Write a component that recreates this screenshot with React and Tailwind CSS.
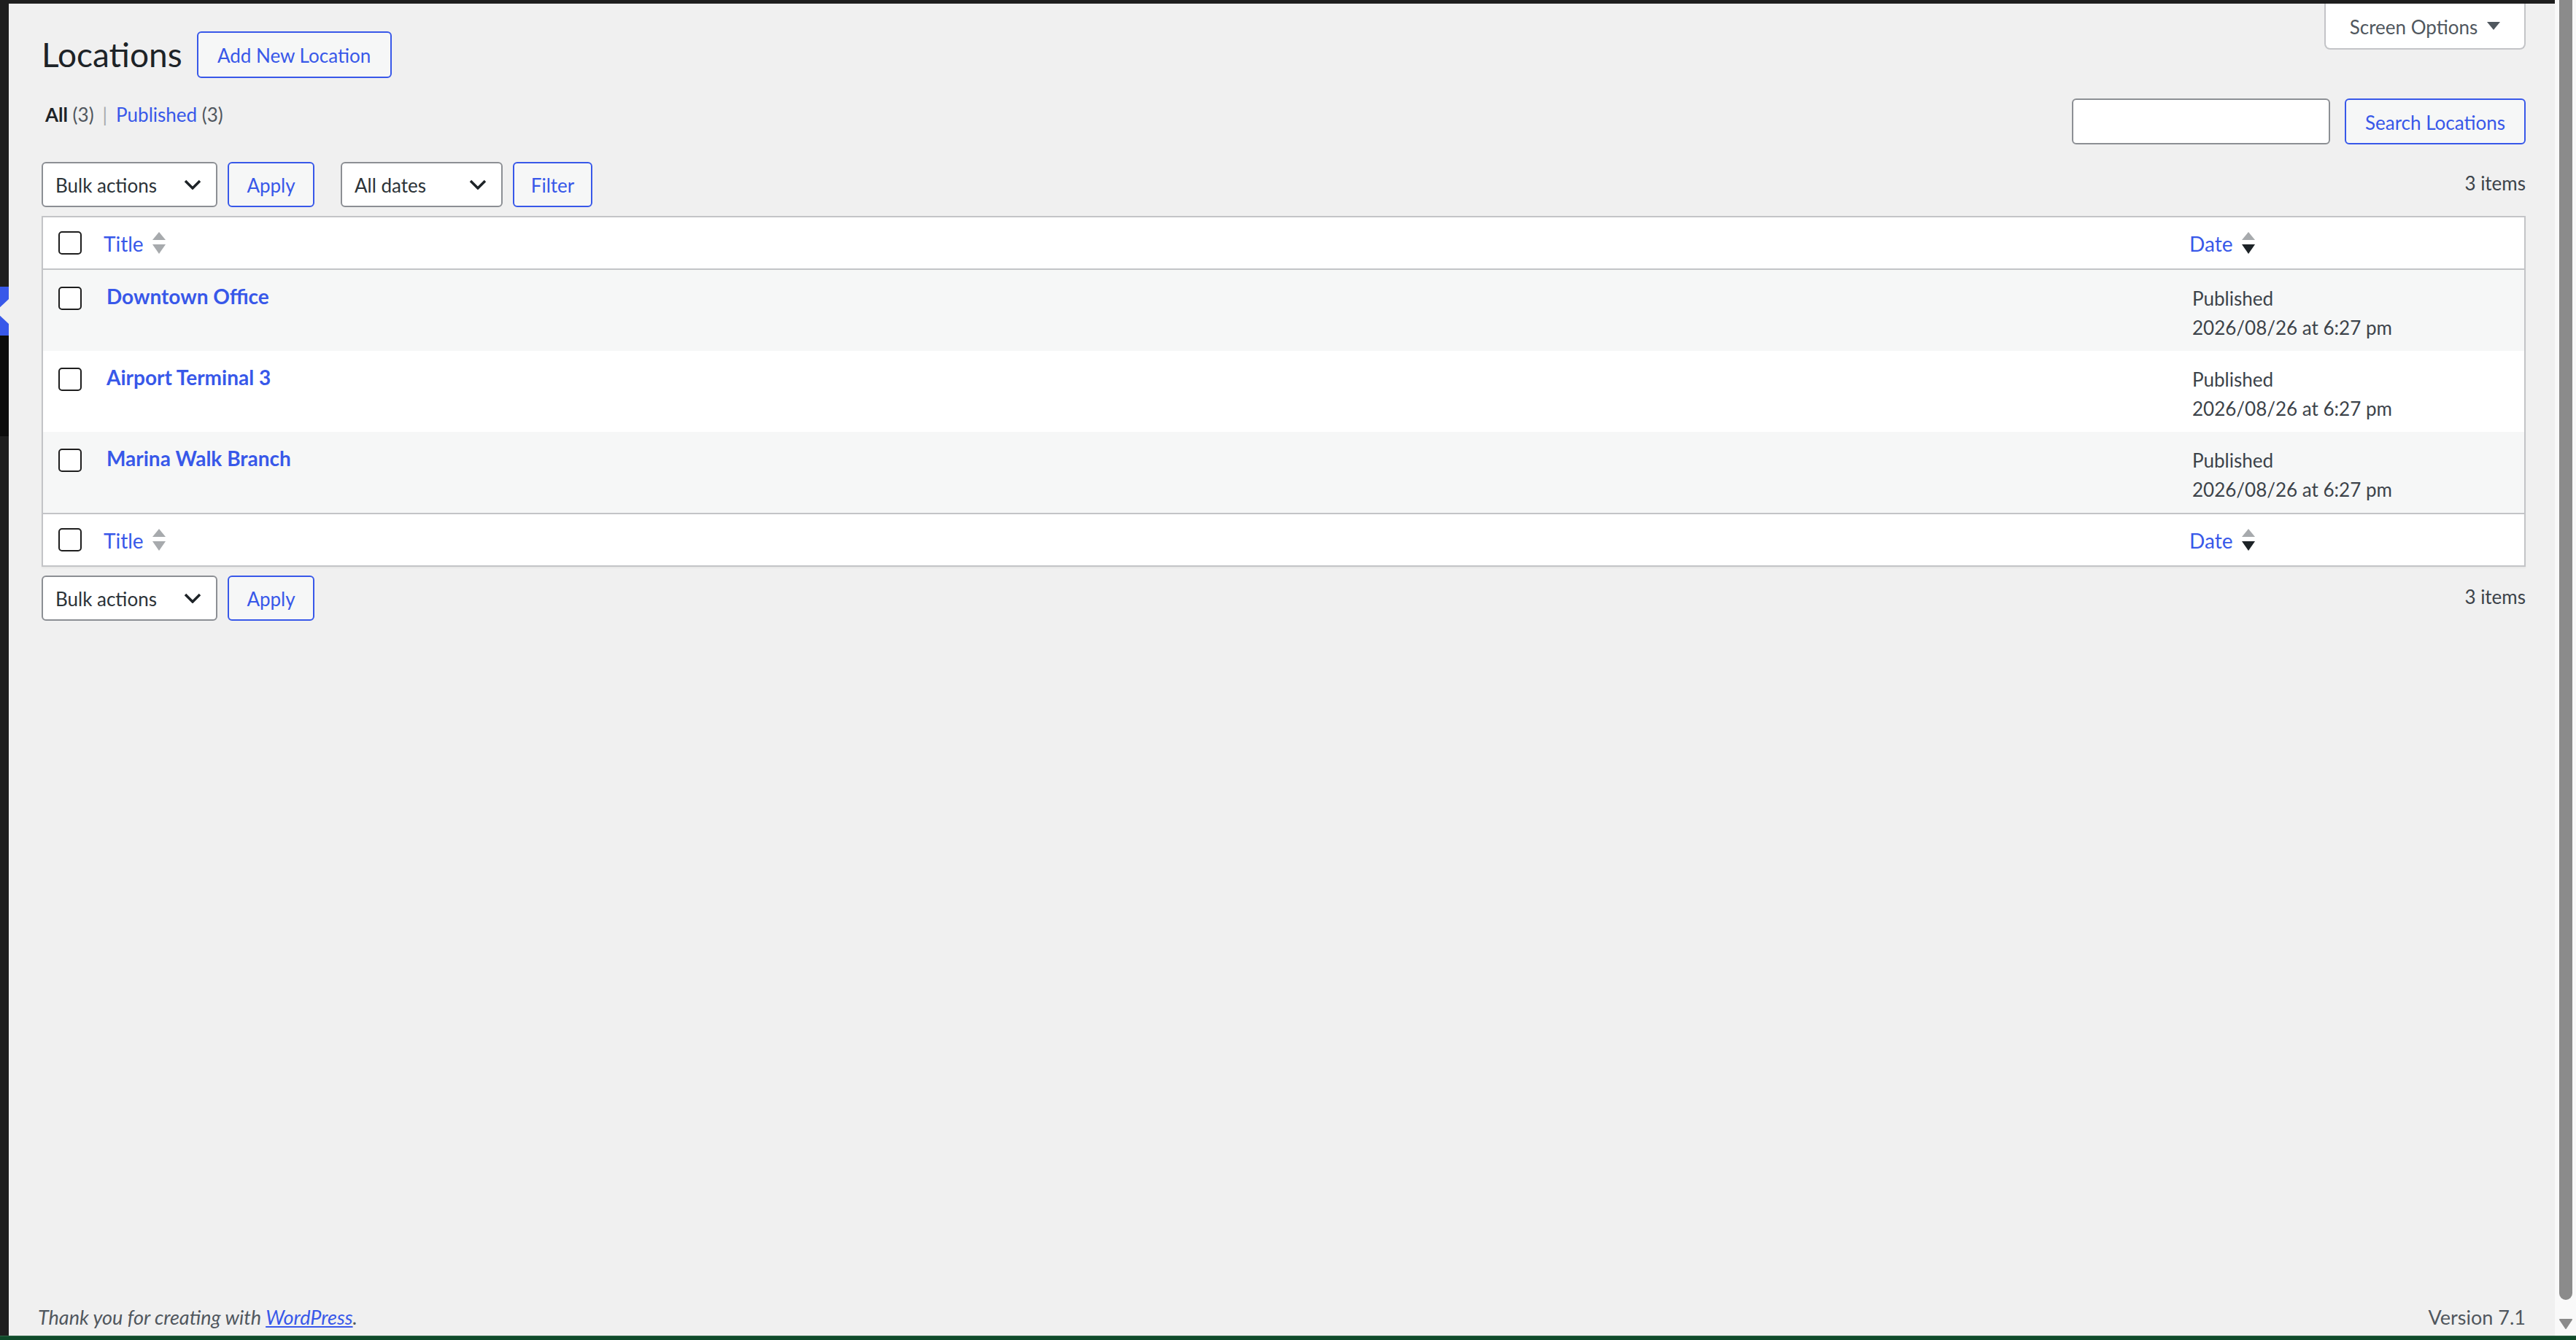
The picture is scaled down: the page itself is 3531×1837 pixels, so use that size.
import React from 'react';

const locations = [
  { title: 'Downtown Office', date: '2026/08/26 at 6:27 pm' },
  { title: 'Airport Terminal 3', date: '2026/08/26 at 6:27 pm' },
  { title: 'Marina Walk Branch', date: '2026/08/26 at 6:27 pm' },
];

function Checkbox() {
  return <span className="block h-[32px] w-[32px] rounded-[5px] border-2 border-[#1e1e1e] bg-white" />;
}

function SortArrows({ desc }) {
  return (
    <svg width="18" height="30" viewBox="0 0 18 30" className="shrink-0">
      <polygon points="0,11 9,0 18,11" fill="#a7aaad" />
      <polygon points="0,17 18,17 9,30" fill={desc ? '#1d2327' : '#a7aaad'} />
    </svg>
  );
}

function Chevron() {
  return (
    <svg width="24" height="14" viewBox="0 0 24 14" fill="none" stroke="#1d2327" strokeWidth="3.5">
      <polyline points="2,2 12,12 22,2" />
    </svg>
  );
}

function SelectBox({ children, className }) {
  return (
    <div
      className={`flex h-[62px] items-center justify-between rounded-[6px] border-2 border-[#8c8f94] bg-white pl-[17px] pr-[20px] text-[26px] leading-[36px] text-[#2c3338] ${className}`}
    >
      <span className="pt-[2px]">{children}</span>
      <Chevron />
    </div>
  );
}

function SecondaryButton({ children, className }) {
  return (
    <button
      className={`flex items-center justify-center rounded-[6px] border-2 border-[#3858e9] bg-[#f6f7f7] pt-[2px] text-[26px] leading-[36px] text-[#3858e9] ${className}`}
    >
      {children}
    </button>
  );
}

function TableNav({ withFilters }) {
  return (
    <div className="flex items-start justify-between">
      <div className="flex items-center">
        <SelectBox className="w-[241px]">Bulk actions</SelectBox>
        <SecondaryButton className="ml-[14px] h-[62px] w-[119px]">Apply</SecondaryButton>
        {withFilters && (
          <>
            <SelectBox className="ml-[36px] w-[222px]">All dates</SelectBox>
            <SecondaryButton className="ml-[14px] h-[62px] w-[109px]">Filter</SecondaryButton>
          </>
        )}
      </div>
      <span className="mt-[11px] text-[26px] leading-[36px] text-[#3c434a]">3 items</span>
    </div>
  );
}

function HeadRow({ top }) {
  return (
    <div
      className={`grid h-[72px] grid-cols-[64px_1fr_477px] items-center border-[#c3c4c7] bg-white ${top ? 'border-b-2' : 'border-t-2'}`}
    >
      <div className="pl-[21px]">
        <Checkbox />
      </div>
      <div className="flex items-center gap-[12px] pl-[19px]">
        <span className="pt-[2px] text-[28px] leading-[40px] text-[#3858e9]">Title</span>
        <SortArrows />
      </div>
      <div className="flex items-center gap-[13px] pl-[18px]">
        <span className="pt-[2px] text-[28px] leading-[40px] text-[#3858e9]">Date</span>
        <SortArrows desc />
      </div>
    </div>
  );
}

export default function App() {
  return (
    <div className="flex h-[1837px] w-full flex-col overflow-hidden bg-[#f0f0f0] font-['Lato',sans-serif]">
      <div className="flex min-h-0 flex-1">
        {/* admin menu edge */}
        <aside className="flex w-[12px] shrink-0 flex-col bg-[#1e1e1e]">
          <div className="h-[393px]" />
          <div className="h-[67px] bg-[#3858e9]">
            <svg width="12" height="67" viewBox="0 0 12 67" className="block">
              <polygon points="12,17 -6,34 12,51" fill="#f0f0f0" />
            </svg>
          </div>
          <div className="h-[138px] bg-[#0c0c0c]" />
        </aside>

        <div className="flex min-w-0 flex-1 flex-col">
          <div className="h-[5px] shrink-0 bg-[#1e1e1e]" />

          <div className="pl-[45px] pr-[40px]">
            {/* Heading + screen options */}
            <div className="flex items-start justify-between">
              <div className="flex items-center pt-[38px]">
                <h1 className="text-[46px] leading-[60px] font-normal text-[#1d2327]">Locations</h1>
                <button className="ml-[20px] flex h-[64px] w-[267px] items-center justify-center rounded-[6px] border-2 border-[#3858e9] bg-[#f6f7f7] pt-[2px] text-[26px] leading-[36px] text-[#3858e9]">
                  Add New Location
                </button>
              </div>
              <button className="flex h-[63px] w-[276px] items-center justify-center gap-[13px] rounded-b-[8px] border-2 border-t-0 border-[#c3c4c7] bg-white text-[26px] leading-[36px] text-[#50575e]">
                <span className="pt-[2px]">Screen Options</span>
                <svg width="18" height="11" viewBox="0 0 18 11">
                  <polygon points="0,0 18,0 9,11" fill="#50575e" />
                </svg>
              </button>
            </div>

            {/* Views + search */}
            <div className="mt-[28px] flex items-start justify-between">
              <ul className="ml-[5px] mt-[4px] flex items-center text-[26px] leading-[36px] text-[#50575e]">
                <li>
                  <span className="font-bold text-[#1d2327]">All</span> (3)
                  <span className="mx-[12px] text-[#a7aaad]">|</span>
                </li>
                <li>
                  <span className="text-[#3858e9]">Published</span> (3)
                </li>
              </ul>
              <div className="flex gap-[20px]">
                <input
                  type="search"
                  className="h-[63px] w-[354px] rounded-[6px] border-2 border-[#8c8f94] bg-white px-[16px] text-[26px] outline-none"
                />
                <SecondaryButton className="h-[63px] w-[248px]">Search Locations</SecondaryButton>
              </div>
            </div>

            {/* Top tablenav */}
            <div className="mt-[24px]">
              <TableNav withFilters />
            </div>

            {/* List table */}
            <div className="mt-[12px] border-2 border-[#c3c4c7] bg-white shadow-[0_2px_2px_rgba(0,0,0,0.04)]">
              <HeadRow top />
              {locations.map((loc, i) => (
                <div
                  key={loc.title}
                  className={`grid h-[111px] grid-cols-[64px_1fr_477px] items-start ${i % 2 === 0 ? 'bg-[#f6f7f7]' : 'bg-white'}`}
                >
                  <div className="pl-[21px] pt-[23px]">
                    <Checkbox />
                  </div>
                  <div className="pl-[23px] pt-[16px] text-[28px] leading-[40px] font-bold text-[#3858e9]">
                    {loc.title}
                  </div>
                  <div className="pl-[22px] pt-[19px] text-[26px] leading-[40px] text-[#3c434a]">
                    Published
                    <br />
                    {loc.date}
                  </div>
                </div>
              ))}
              <HeadRow />
            </div>

            {/* Bottom tablenav */}
            <div className="mt-[12px]">
              <TableNav />
            </div>
          </div>

          <div className="flex-1" />

          <footer className="flex items-end justify-between pb-[7px] pl-[40px] pr-[40px] text-[27px] leading-[36px] text-[#50575e]">
            <p className="italic">
              Thank you for creating with <a className="text-[#3858e9] underline">WordPress</a>.
            </p>
            <p>Version 7.1</p>
          </footer>
        </div>

        {/* scrollbar */}
        <div className="flex w-[29px] shrink-0 flex-col items-start bg-[#f9f9f9] pl-[6px]">
          <div className="h-[1782px] w-[18px] rounded-b-[9px] bg-[#8b8b8b]" />
          <svg width="18" height="14" viewBox="0 0 18 14" className="mt-[26px]">
            <polygon points="1,1 17,1 9,13" fill="#8b8b8b" stroke="#8b8b8b" strokeWidth="2" strokeLinejoin="round" />
          </svg>
        </div>
      </div>
      <div className="h-[6px] shrink-0 border-t border-[#2d6443] bg-[#0f4a2a]" />
    </div>
  );
}
